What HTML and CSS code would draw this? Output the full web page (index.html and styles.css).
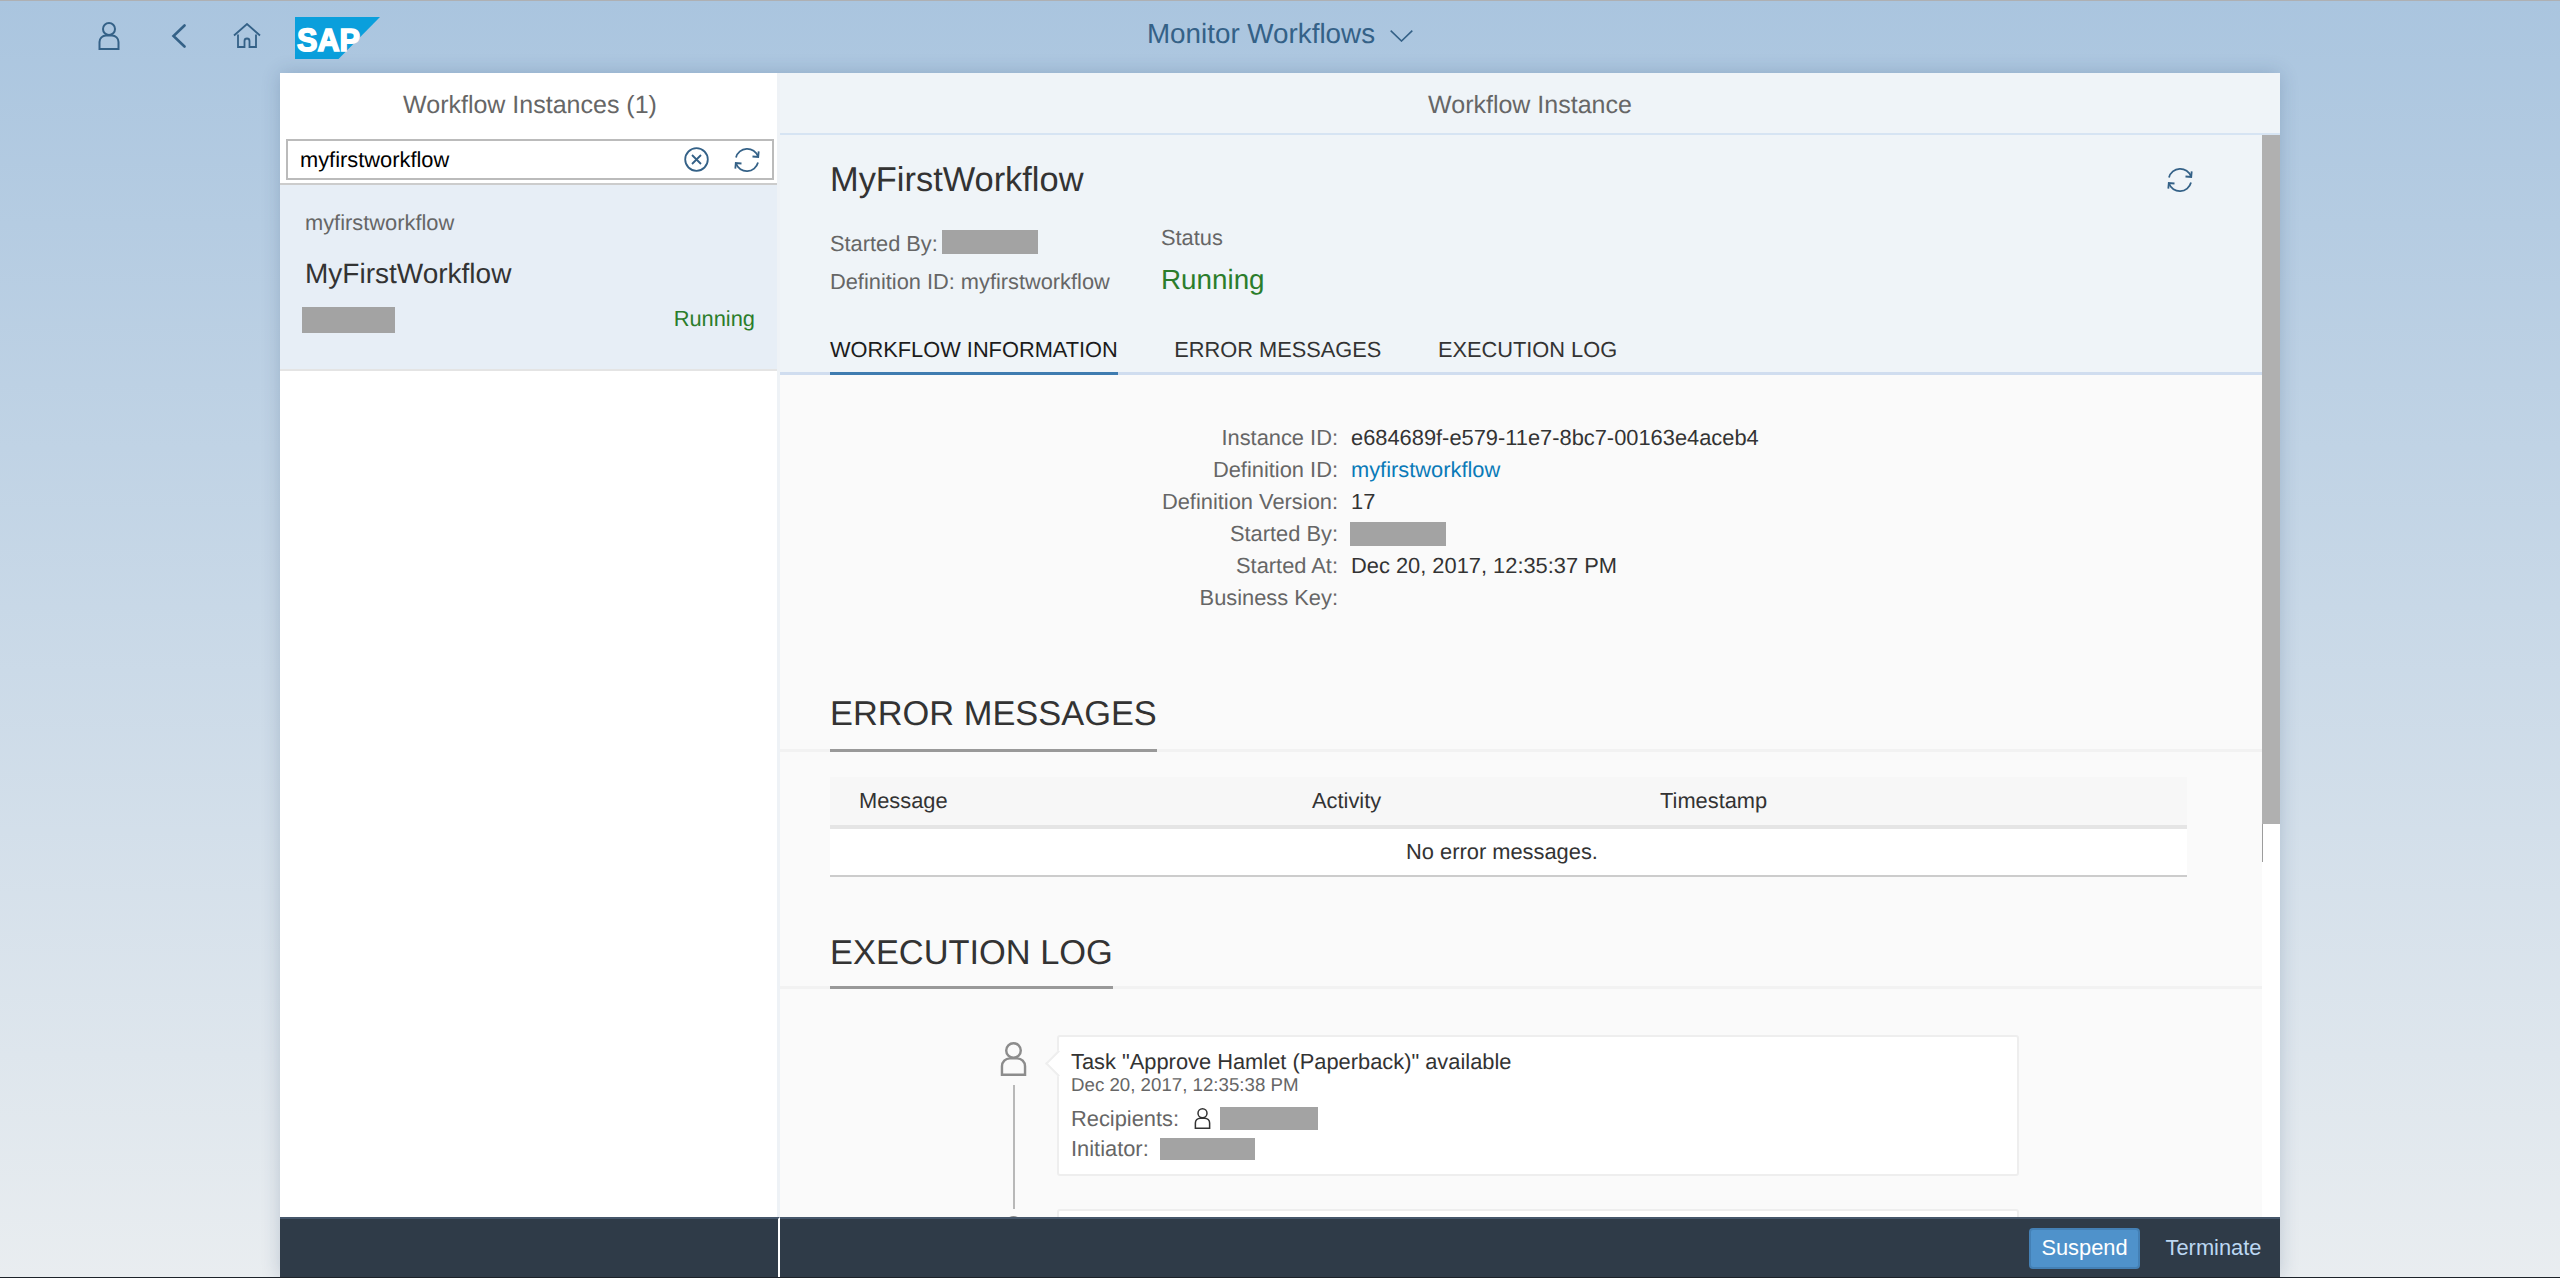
FILE: index.html
```html
<!DOCTYPE html>
<html lang="en">
<head>
<meta charset="utf-8">
<title>Monitor Workflows</title>
<link rel="stylesheet" href="styles.css">
</head>
<body>
<svg class="defs" width="0" height="0" aria-hidden="true">
  <symbol id="i-user" viewBox="0 0 22 28">
    <circle cx="11" cy="7" r="6" fill="none" stroke="currentColor" stroke-width="2"/>
    <path d="M1.5 27V20a6.500 6.500 0 0 1 6.500-6.500h6a6.500 6.500 0 0 1 6.500 6.500v7z" fill="none" stroke="currentColor" stroke-width="2"/>
  </symbol>
  <symbol id="i-refresh" viewBox="0 0 26 26">
    <path d="M2 10.500A11.500 11.500 0 0 1 24 9.500" fill="none" stroke="currentColor" stroke-width="1.800"/>
    <path d="M18.500 9.500l5.700.5.500-5.700" fill="none" stroke="currentColor" stroke-width="1.800"/>
    <path d="M24 15.500A11.500 11.500 0 0 1 2 16.500" fill="none" stroke="currentColor" stroke-width="1.800"/>
    <path d="M7.500 16.500l-5.700-.5-.5 5.700" fill="none" stroke="currentColor" stroke-width="1.800"/>
  </symbol>
</svg>
<div class="app">
  <header class="topbar">
    <div class="top-left">
      <svg class="ic-user" width="22" height="28"><use href="#i-user"/></svg>
      <svg class="ic-back" width="15" height="24" viewBox="0 0 15 24"><path d="M13.500 1.500L2.500 12l11 10.500" fill="none" stroke="currentColor" stroke-width="2.600" stroke-linecap="round"/></svg>
      <svg class="ic-home" width="28" height="25" viewBox="0 0 28 25"><path d="M1 12.500L14 1l13 11.500" fill="none" stroke="currentColor" stroke-width="1.800"/><path d="M5 11.500V24h6.500v-6a2.500 2.500 0 0 1 5 0v6H23V11.500" fill="none" stroke="currentColor" stroke-width="1.800"/></svg>
      <svg class="logo" width="85" height="42" viewBox="0 0 85 42"><polygon points="0,0 85,0 43.500,42 0,42" fill="#0a9fdc"/><text class="logo-text" x="2" y="34" textLength="63" lengthAdjust="spacingAndGlyphs">SAP</text></svg>
    </div>
    <div class="top-title">
      <span>Monitor Workflows</span>
      <svg width="23" height="12" viewBox="0 0 23 12"><path d="M.7.7L11.500 11 22.300.7" fill="none" stroke="currentColor" stroke-width="1.600"/></svg>
    </div>
    <div></div>
  </header>

  <main class="card">
    <section class="master">
      <div class="master-body">
        <div class="pane-head pane-head-light">Workflow Instances (1)</div>
        <div class="search-wrap">
          <div class="search">
            <span class="search-text">myfirstworkflow</span>
            <svg class="ic-clear" width="25" height="25" viewBox="0 0 25 25"><circle cx="12.500" cy="12.500" r="11.300" fill="none" stroke="currentColor" stroke-width="1.800"/><path d="M8 8l9 9M17 8l-9 9" fill="none" stroke="currentColor" stroke-width="1.800"/></svg>
            <svg class="ic-refresh" width="26" height="26"><use href="#i-refresh"/></svg>
          </div>
        </div>
        <article class="item">
          <div class="item-sub">myfirstworkflow</div>
          <div class="item-title">MyFirstWorkflow</div>
          <div class="item-foot">
            <span class="mask mask-item"></span>
            <span class="item-status">Running</span>
          </div>
        </article>
      </div>
      <div class="bar bar-master"></div>
    </section>

    <section class="detail">
      <div class="pane-head pane-head-tint">Workflow Instance</div>
      <div class="detail-body">
        <div class="scroll-view">
          <div class="object-head">
            <div class="object-top">
              <h1 class="object-title">MyFirstWorkflow</h1>
              <svg class="ic-refresh" width="26" height="26"><use href="#i-refresh"/></svg>
            </div>
            <div class="object-meta">
              <div class="meta-left">
                <div class="meta-line">Started By:<span class="mask mask-head"></span></div>
                <div class="meta-line">Definition ID: myfirstworkflow</div>
              </div>
              <div class="meta-right">
                <div class="meta-status-label">Status</div>
                <div class="meta-status">Running</div>
              </div>
            </div>
            <nav class="tabs">
              <span class="tab tab-active">WORKFLOW INFORMATION</span>
              <span class="tab">ERROR MESSAGES</span>
              <span class="tab">EXECUTION LOG</span>
            </nav>
          </div>

          <dl class="info">
            <dt>Instance ID:</dt><dd>e684689f-e579-11e7-8bc7-00163e4aceb4</dd>
            <dt>Definition ID:</dt><dd class="link">myfirstworkflow</dd>
            <dt>Definition Version:</dt><dd>17</dd>
            <dt>Started By:</dt><dd><span class="mask mask-info"></span></dd>
            <dt>Started At:</dt><dd>Dec 20, 2017, 12:35:37 PM</dd>
            <dt>Business Key:</dt><dd></dd>
          </dl>

          <div class="sec-head sec-errors"><h2>ERROR MESSAGES</h2></div>
          <div class="table">
            <div class="table-head">
              <span>Message</span><span>Activity</span><span>Timestamp</span>
            </div>
            <div class="table-empty">No error messages.</div>
          </div>

          <div class="sec-head sec-log"><h2>EXECUTION LOG</h2></div>
          <div class="timeline">
            <div class="tl-item">
              <div class="tl-rail">
                <svg class="tl-icon" width="27" height="34"><use href="#i-user"/></svg>
                <span class="tl-line"></span>
              </div>
              <div class="tl-card">
                <div class="tl-title">Task "Approve Hamlet (Paperback)" available</div>
                <div class="tl-date">Dec 20, 2017, 12:35:38 PM</div>
                <div class="tl-row tl-row-first">Recipients:<svg class="tl-small" width="17" height="21"><use href="#i-user"/></svg><span class="mask mask-rec"></span></div>
                <div class="tl-row">Initiator:<span class="mask mask-init"></span></div>
              </div>
            </div>
            <div class="tl-item">
              <div class="tl-rail">
                <svg class="tl-icon" width="27" height="34"><use href="#i-user"/></svg>
              </div>
              <div class="tl-card tl-card-next"></div>
            </div>
          </div>
        </div>
        <div class="scrollbar">
          <div class="track"><div class="thumb"></div></div>
        </div>
      </div>
      <div class="bar bar-detail">
        <button class="btn btn-primary" type="button">Suspend</button>
        <button class="btn btn-plain" type="button">Terminate</button>
      </div>
    </section>
  </main>
</div>
<div class="edge"></div>
</body>
</html>
```
FILE: styles.css
```css
* { box-sizing: border-box; }
html, body { margin: 0; height: 100%; }
body {
  height: 1278px;
  overflow: hidden;
  display: flex;
  flex-direction: column;
  background: linear-gradient(180deg, #aac5df 0%, #e9edf0 100%);
  font-family: "Liberation Sans", Arial, sans-serif;
  font-size: 21.85px;
  color: #333;
  text-rendering: geometricPrecision;
}
.defs { position: absolute; }
.app { flex: 1; min-height: 0; display: flex; flex-direction: column; }
.edge { height: 1px; background: #1c2229; }

/* top bar */
.topbar {
  height: 73px;
  flex: none;
  border-top: 1px solid #aeb0b3;
  display: grid;
  grid-template-columns: 1fr auto 1fr;
  color: #346187;
}
.top-left { display: flex; align-items: flex-start; padding-left: 98px; }
.ic-user { margin-top: 21px; }
.ic-back { margin: 23px 0 0 51px; }
.ic-home { margin: 22px 0 0 47px; }
.logo { margin: 16px 0 0 34px; }
.logo-text {
  font-family: "Liberation Sans", Arial, sans-serif;
  font-weight: 700;
  font-size: 32px;
  fill: #fff;
  stroke: #fff;
  stroke-width: 1.6px;
}
.top-title { display: flex; align-items: center; gap: 15px; height: 66px; font-size: 27.8px; }
.top-title svg { margin-top: 3px; }

/* card */
.card {
  flex: 1;
  min-height: 0;
  width: 2000px;
  margin: 0 auto;
  display: flex;
  box-shadow: 0 0 18px rgba(20, 50, 90, .2);
}
.pane-head {
  flex: none;
  height: 60px;
  line-height: 64px;
  text-align: center;
  font-size: 25px;
  color: #666;
}
.pane-head-light { padding-left: 3px; }
.pane-head-tint {
  height: 62px;
  background: #eff4f8;
  border-bottom: 2px solid #d6e4f3;
}

/* master */
.master { width: 500px; flex: none; display: flex; flex-direction: column; background: #fff; }
.master-body { flex: 1; min-height: 0; border-right: 3px solid #eef2f6; background: #fff; }
.search-wrap { padding: 6px 3px 3px 6px; border-bottom: 2px solid #ccc; }
.search {
  height: 41px;
  border: 2px solid #bbb;
  display: flex;
  align-items: center;
  padding-left: 12px;
  color: #346187;
}
.search-text { flex: 1; color: #000; }
.ic-clear { margin-right: 25px; }
.ic-refresh { color: #346187; }
.search .ic-refresh { margin-right: 12px; }
.item {
  height: 186px;
  padding: 23px 22px 0 25px;
  background: #e7eef6;
  border-bottom: 2px solid #e4e4e4;
}
.item-sub { line-height: 30px; color: #666; }
.item-title { margin-top: 16px; line-height: 40px; font-size: 28px; color: #333; }
.item-foot { margin-top: 9px; display: flex; justify-content: space-between; align-items: flex-start; }
.item-status { line-height: 32px; color: #2b7d2b; }

.mask { display: inline-block; background: #a3a3a3; flex: none; }
.mask-item { width: 93px; height: 26px; margin: 4px 0 0 -3px; }
.mask-head { width: 96px; height: 24px; margin: 6px 0 0 4px; }
.mask-info { width: 96px; height: 24px; margin-left: -1px; }
.mask-rec { width: 98px; height: 23px; margin: 4px 0 0 9px; }
.mask-init { width: 95px; height: 22px; margin: 5px 0 0 11px; }

/* bars */
.bar {
  flex: none;
  height: 60px;
  background: #2f3b48;
  border-top: 2px solid #45566a;
}
.bar-master { border-right: 2px solid #fff; }
.bar-detail {
  display: flex;
  align-items: center;
  justify-content: flex-end;
  gap: 25px;
  padding: 0 18px 0 0;
}
.btn { font: inherit; font-size: 21.85px; border-radius: 4px; padding: 0; cursor: pointer; }
.btn-primary {
  width: 111px;
  height: 41px;
  color: #fff;
  background: #4f92cb;
  border: 2px solid #4480b5;
}
.btn-plain { width: 97px; height: 41px; color: #bcd7f2; background: none; border: none; }

/* detail */
.detail { flex: 1; min-width: 0; display: flex; flex-direction: column; background: #fff; }
.detail-body { flex: 1; min-height: 0; display: flex; }
.scroll-view { flex: 1; min-width: 0; overflow: hidden; background: #fafafa; }
.scrollbar { width: 18px; flex: none; background: #fff; }
.track { height: 727px; border-left: 1px solid #9c9c9c; }
.thumb { height: 689px; margin-left: -1px; background: #b0b0b0; }

.object-head { height: 240px; padding: 25px 0 0 50px; background: #eff4f8; border-bottom: 3px solid #d0ddef; }
.object-top { display: flex; justify-content: space-between; align-items: center; height: 40px; padding-right: 69px; }
.object-title { margin: 0; font-size: 34.4px; font-weight: 400; color: #333; }
.object-meta { display: flex; margin-top: 24px; height: 76px; color: #666; font-size: 21.8px; }
.meta-left { width: 331px; }
.meta-line { display: flex; align-items: flex-start; height: 38px; line-height: 40px; }
.meta-status-label { line-height: 28px; }
.meta-status { margin-top: 11px; line-height: 34px; font-size: 27.8px; color: #2b7d2b; }
.tabs { display: flex; gap: 56.5px; margin-top: 25px; font-size: 21.8px; }
.tab { height: 50px; line-height: 49px; color: #333; }
.tab-active { color: #1c1c1c; border-bottom: 3px solid #3f7cb0; }

.info {
  margin: 47px 0 0;
  display: grid;
  grid-template-columns: 558px 1fr;
  column-gap: 13px;
  grid-auto-rows: 32px;
  line-height: 32px;
}
.info dt { text-align: right; color: #666; }
.info dd { margin: 0; color: #333; display: flex; align-items: center; }
.info .link { color: #0a7ab8; }

.sec-head { padding-left: 50px; border-bottom: 3px solid #f2f2f2; }
.sec-errors { margin-top: 69px; }
.sec-log { margin-top: 45px; }
.sec-head h2 {
  display: inline-block;
  vertical-align: bottom;
  margin: 0 0 -3px;
  line-height: 62px;
  font-size: 34.4px;
  font-weight: 400;
  color: #333;
  border-bottom: 3px solid #999;
}
.sec-errors h2 { padding-bottom: 4px; }
.sec-log h2 { padding-bottom: 2px; }

.table { margin: 25px 0 0 50px; width: 1357px; }
.table-head {
  height: 52px;
  padding-left: 29px;
  display: grid;
  grid-template-columns: 453px 348px 1fr;
  align-items: center;
  background: #f7f7f7;
  border-bottom: 4px solid #e5e5e5;
  color: #333;
}
.table-empty {
  height: 48px;
  line-height: 46px;
  padding-right: 13px;
  text-align: center;
  background: #fff;
  border-bottom: 2px solid #ccc;
}

.timeline { padding: 46px 0 0 220px; }
.tl-item { display: flex; }
.tl-rail { width: 57px; flex: none; display: flex; flex-direction: column; padding-top: 7px; color: #8c8c8c; }
.tl-icon { flex: none; }
.tl-line { flex: 1; width: 2px; margin: 9px 0 0 13px; background: #b8b8b8; }
.tl-card {
  position: relative;
  width: 962px;
  height: 141px;
  margin-bottom: 33px;
  padding: 14px 0 0 12px;
  background: #fff;
  border: 2px solid #eee;
  border-radius: 3px;
}
.tl-card::before {
  content: "";
  position: absolute;
  left: -10px;
  top: 17px;
  width: 17px;
  height: 17px;
  background: #fff;
  border-left: 2px solid #eee;
  border-bottom: 2px solid #eee;
  transform: rotate(45deg);
}
.tl-card-next::before { display: none; }
.tl-title { line-height: 22px; color: #333; }
.tl-date { margin-top: 1px; line-height: 22px; font-size: 18.7px; color: #666; }
.tl-row { display: flex; align-items: flex-start; height: 30px; line-height: 32px; color: #666; }
.tl-row-first { margin-top: 7px; }
.tl-small { margin: 5px 0 0 15px; color: #333; }
```
